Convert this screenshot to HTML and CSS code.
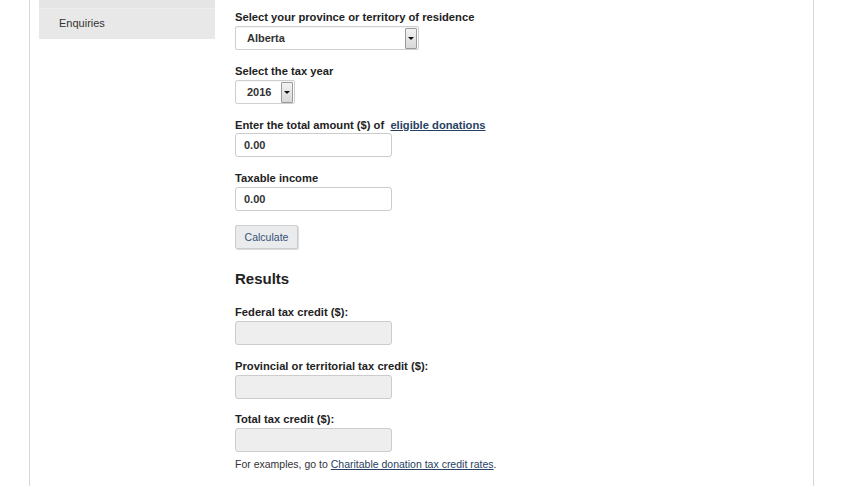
FILE: index.html
```html
<!DOCTYPE html>
<html lang="en">
<head>
<meta charset="utf-8">
<title>Charitable donation tax credit calculator</title>
<link rel="stylesheet" href="styles.css">
</head>
<body>
<div class="page">
  <aside class="sidebar">
    <div class="nav-item nav-top"></div>
    <div class="nav-item">Enquiries</div>
  </aside>
  <main class="main">
    <div class="group">
      <label class="label">Select your province or territory of residence</label>
      <div class="select select-wide">
        <span class="select-value">Alberta</span>
        <span class="select-btn"><span class="caret"></span></span>
      </div>
    </div>
    <div class="group">
      <label class="label">Select the tax year</label>
      <div class="select select-year">
        <span class="select-value">2016</span>
        <span class="select-btn"><span class="caret"></span></span>
      </div>
    </div>
    <div class="group">
      <label class="label label-tight">Enter the total amount ($) of&nbsp; <a class="link-bold" href="#">eligible donations</a></label>
      <div class="input">0.00</div>
    </div>
    <div class="group">
      <label class="label">Taxable income</label>
      <div class="input">0.00</div>
    </div>
    <button class="btn">Calculate</button>
    <h2 class="heading">Results</h2>
    <div class="group">
      <label class="label">Federal tax credit ($):</label>
      <div class="input input-disabled"></div>
    </div>
    <div class="group group-tight">
      <label class="label">Provincial or territorial tax credit ($):</label>
      <div class="input input-disabled"></div>
    </div>
    <div class="group group-last">
      <label class="label">Total tax credit ($):</label>
      <div class="input input-disabled"></div>
    </div>
    <p class="note">For examples, go to <a class="link" href="#">Charitable donation tax credit rates</a>.</p>
  </main>
</div>
</body>
</html>
```

FILE: styles.css
```css
html, body {
  margin: 0;
  padding: 0;
  background: #fff;
  font-family: "Liberation Sans", Arial, sans-serif;
  color: #333;
}
.page {
  margin-left: 29px;
  width: 774px;
  height: 486px;
  border-left: 1px solid #d8d8d8;
  border-right: 1px solid #d8d8d8;
  display: flex;
  gap: 20px;
  padding-left: 9px;
  box-sizing: content-box;
  overflow: hidden;
}
.sidebar {
  width: 176px;
  flex: none;
  align-self: flex-start;
  background: #e8e8e8;
}
.nav-item {
  font-size: 11px;
  color: #333;
  padding: 0 20px;
  height: 30px;
  line-height: 28px;
}
.nav-top {
  height: 8px;
  border-bottom: 1px solid #eeeeee;
  background: #e5e5e5;
}
.main {
  flex: 1;
  padding-top: 10px;
}
.group {
  margin-bottom: 14px;
}
.group-tight {
  margin-bottom: 13px;
}
.group-last {
  margin-bottom: 5px;
}
.label {
  display: block;
  font-size: 11.2px;
  font-weight: bold;
  line-height: 14px;
  color: #222;
  margin-bottom: 2px;
}
.label-tight {
  margin-bottom: 1px;
}
.link-bold {
  color: #284162;
  text-decoration: underline;
}
.select {
  box-sizing: border-box;
  height: 24px;
  border: 1px solid #cfcfcf;
  border-radius: 2px;
  display: flex;
  align-items: center;
  justify-content: space-between;
  background: #fff;
  box-shadow: inset 0 1px 1px rgba(0,0,0,0.05);
}
.select-wide { width: 184px; }
.select-year { width: 60px; }
.select-value {
  font-size: 11px;
  font-weight: bold;
  color: #333;
  padding-left: 11px;
}
.select-btn {
  width: 12px;
  height: 21px;
  margin-right: 1px;
  box-sizing: border-box;
  border: 1px solid #9a9a9a;
  border-radius: 1px;
  background: linear-gradient(#f2f2f2, #d8d8d8);
  display: flex;
  align-items: center;
  justify-content: center;
}
.caret {
  width: 0;
  height: 0;
  border-left: 3px solid transparent;
  border-right: 3px solid transparent;
  border-top: 3px solid #111;
}
.input {
  box-sizing: border-box;
  width: 157px;
  height: 24px;
  border: 1px solid #cccccc;
  border-radius: 3px;
  font-size: 11px;
  font-weight: bold;
  line-height: 22px;
  padding-left: 8px;
  color: #333;
  background: #fff;
}
.input-disabled {
  background: #eeeeee;
}
.btn {
  display: block;
  box-sizing: border-box;
  width: 63px;
  height: 24px;
  padding: 0;
  margin: 0;
  border: 1px solid #cccccc;
  border-radius: 2px;
  background: #eaebed;
  box-shadow: 1px 1px 1px rgba(0,0,0,0.15);
  font-family: "Liberation Sans", Arial, sans-serif;
  font-size: 10.5px;
  color: #335075;
}
.heading {
  font-size: 15px;
  font-weight: bold;
  color: #222;
  margin: 20px 0 16px;
  line-height: 20px;
}
.note {
  margin: 0;
  font-size: 10.5px;
  line-height: 14px;
  color: #333;
}
.link {
  color: #284162;
  text-decoration: underline;
}
```
